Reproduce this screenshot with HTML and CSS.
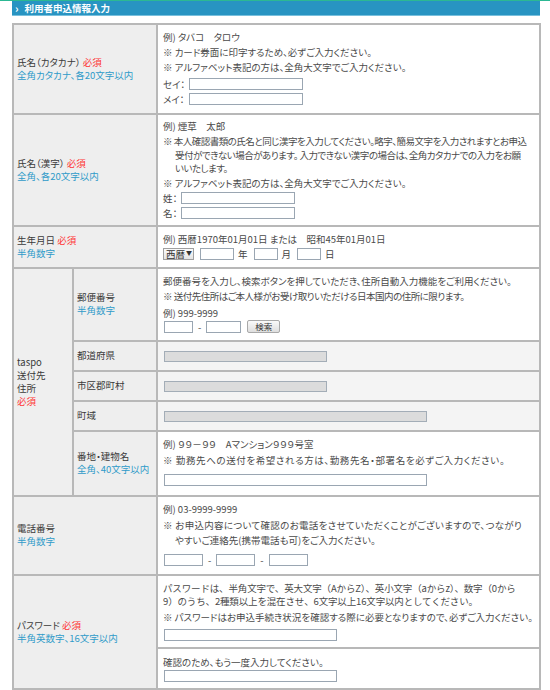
FILE: index.html
```html
<!DOCTYPE html>
<html lang="ja">
<head>
<meta charset="utf-8">
<title>利用者申込情報入力</title>
<link rel="stylesheet" href="styles.css">
</head>
<body>
<div class="topline"></div>
<div class="page">
  <h2 class="bar"><span class="chev">›</span>利用者申込情報入力</h2>
  <table class="form">
    <colgroup><col class="c1"><col class="c2"><col class="c3"></colgroup>
    <tr>
      <th colspan="2" class="lab"><span class="t">氏名（カタカナ）</span> <span class="req">必須</span><br><span class="hint">全角カタカナ、各20文字以内</span></th>
      <td class="f r1">
        <p>例) タバコ　タロウ</p>
        <p class="note">※ カード券面に印字するため、必ずご入力ください。</p>
        <p class="note">※ アルファベット表記の方は、全角大文字でご入力ください。</p>
        <div class="pairs">
          <label class="line"><span class="k kana">セイ：</span><input type="text" class="in w114"></label>
          <label class="line"><span class="k kana">メイ：</span><input type="text" class="in w114"></label>
        </div>
      </td>
    </tr>
    <tr>
      <th colspan="2" class="lab"><span class="t">氏名（漢字）</span> <span class="req">必須</span><br><span class="hint">全角、各20文字以内</span></th>
      <td class="f r2">
        <p>例) 煙草　太郎</p>
        <p class="note tight">※ 本人確認書類の氏名と同じ漢字を入力してください。略字、簡易文字を入力されますとお申込<br>受付ができない場合があります。 入力できない漢字の場合は、全角カタカナでの入力をお願<br>いいたします。</p>
        <p class="note after">※ アルファベット表記の方は、全角大文字でご入力ください。</p>
        <div class="pairs">
          <label class="line"><span class="k kanji">姓：</span><input type="text" class="in w114"></label>
          <label class="line"><span class="k kanji">名：</span><input type="text" class="in w114"></label>
        </div>
      </td>
    </tr>
    <tr>
      <th colspan="2" class="lab"><span class="t">生年月日</span> <span class="req">必須</span><br><span class="hint">半角数字</span></th>
      <td class="f r3">
        <p>例) 西暦1970年01月01日 または　昭和45年01月01日</p>
        <div class="line date">
          <span class="select">西暦<span class="arr">▼</span></span>
          <input type="text" class="in w34"><span class="u">年</span>
          <input type="text" class="in w24"><span class="u">月</span>
          <input type="text" class="in w24"><span class="u">日</span>
        </div>
      </td>
    </tr>
    <tr>
      <th rowspan="5" class="lab taspo"><span class="t">taspo<br>送付先<br>住所</span><br><span class="req">必須</span></th>
      <th class="lab sublab"><span class="t">郵便番号</span><br><span class="hint">半角数字</span></th>
      <td class="f r4">
        <p>郵便番号を入力し、検索ボタンを押していただき、住所自動入力機能をご利用ください。</p>
        <p class="note zipnote">※ 送付先住所はご本人様がお受け取りいただける日本国内の住所に限ります。</p>
        <p class="ex2">例) 999-9999</p>
        <div class="line zip">
          <input type="text" class="in w29"><span class="dash">-</span><input type="text" class="in w35">
          <button type="button" class="btn">検索</button>
        </div>
      </td>
    </tr>
    <tr>
      <th class="lab sublab"><span class="t">都道府県</span></th>
      <td class="f dis"><input type="text" class="in off w163" disabled></td>
    </tr>
    <tr>
      <th class="lab sublab"><span class="t">市区郡町村</span></th>
      <td class="f dis"><input type="text" class="in off w163" disabled></td>
    </tr>
    <tr>
      <th class="lab sublab"><span class="t">町域</span></th>
      <td class="f dis"><input type="text" class="in off w263" disabled></td>
    </tr>
    <tr>
      <th class="lab sublab"><span class="t">番地・建物名</span><br><span class="hint">全角、40文字以内</span></th>
      <td class="f r8">
        <p>例) ９９－９９　Aマンション９９９号室</p>
        <p class="note wide">※ 勤務先への送付を希望される方は、勤務先名・部署名を必ずご入力ください。</p>
        <div class="line addr"><input type="text" class="in w263"></div>
      </td>
    </tr>
    <tr>
      <th colspan="2" class="lab"><span class="t">電話番号</span><br><span class="hint">半角数字</span></th>
      <td class="f r9">
        <p>例) 03-9999-9999</p>
        <p class="note tall"><span class="telwide">※ お申込内容について確認のお電話をさせていただくことがございますので、つながり</span><br>やすいご連絡先(携帯電話も可)をご入力ください。</p>
        <div class="line tel">
          <input type="text" class="in w39"><span class="dash">-</span><input type="text" class="in w39"><span class="dash">-</span><input type="text" class="in w39">
        </div>
      </td>
    </tr>
    <tr>
      <th rowspan="2" colspan="2" class="lab"><span class="t">パスワード</span> <span class="req">必須</span><br><span class="hint">半角英数字、16文字以内</span></th>
      <td class="f r10">
        <p class="pw">パスワードは、半角文字で、英大文字（AからZ）、英小文字（aからz）、数字（0から<br>9）のうち、2種類以上を混在させ、6文字以上16文字以内としてください。</p>
        <p class="note pwn">※ パスワードはお申込手続き状況を確認する際に必要となりますので、必ずご入力ください。</p>
        <div class="line pwi"><input type="password" class="in w173"></div>
      </td>
    </tr>
    <tr>
      <td class="f r11">
        <p class="pwc-t">確認のため、もう一度入力してください。</p>
        <div class="line pwc"><input type="password" class="in w173"></div>
      </td>
    </tr>
  </table>
</div>
</body>
</html>
```

FILE: styles.css
```css
* { box-sizing: border-box; }

body {
  margin: 0;
  background: #ffffff;
  color: #4a4a4a;
  font-family: "Noto Sans CJK JP", "Noto Sans", sans-serif;
  font-size: 9.5px;
  font-feature-settings: "palt";
}

.topline {
  height: 1px;
  background: #2cb893;
}

.page {
  padding: 0 9px 0 12px;
}

.bar {
  margin: 0 1px 0 0;
  height: 15px;
  background: #2894c2;
  border-bottom: 1px solid #79c0dd;
  color: #ffffff;
  font-size: 9.5px;
  font-weight: bold;
  line-height: 14px;
  display: flex;
  align-items: center;
  padding-left: 3px;
}

.chev {
  font-size: 11px;
  margin-right: 6px;
  line-height: 14px;
}

.form {
  margin-top: 7px;
  width: 529px;
  table-layout: fixed;
  border-collapse: collapse;
  border: 2px solid #a9a9a9;
}

.c1 { width: 60px; }
.c2 { width: 84px; }

.form th,
.form td {
  border: 2px solid #b8b8b8;
  vertical-align: middle;
}

.lab {
  background: #eeeeee;
  text-align: left;
  font-weight: normal;
  padding: 0 3px;
  line-height: 13px;
  color: #3a3a3a;
}

.taspo { background: #efefef; }

.req { color: #ff3333; }
.hint { color: #2f9bc9; }

.f {
  background: #ffffff;
  padding: 6px 5px 8px 5px;
}

.f p {
  margin: 3px 0 0;
  line-height: 12px;
  white-space: nowrap;
}
.f p:first-child { margin-top: 0; }

.note {
  padding-left: 12px;
  text-indent: -12px;
}

.tight {
  letter-spacing: -0.5px;
  line-height: 13.5px !important;
}
.after { margin-top: 1px !important; }
.zipnote { letter-spacing: -0.5px; }
.wide { letter-spacing: 0.6px; }
.telwide { letter-spacing: 0.3px; }

.line {
  display: flex;
  align-items: center;
  height: 12px;
}

.pairs {
  margin-top: 5px;
  display: flex;
  flex-direction: column;
  gap: 3px;
}

.k { display: inline-block; }
.kana { width: 26px; }
.kanji { width: 18px; }

.in {
  height: 12px;
  padding: 0;
  margin: 0;
  border: 1px solid #9aa6b2;
  background: #ffffff;
  font: inherit;
}

.off {
  height: 11px;
  background: #dcdcdc;
  border-color: #a3adb7;
}

.w24 { width: 24px; }
.w29 { width: 29px; }
.w34 { width: 34px; }
.w35 { width: 35px; }
.w39 { width: 39px; }
.w114 { width: 114px; }
.w163 { width: 163px; }
.w173 { width: 173px; }
.w263 { width: 263px; }

.r1 { padding-top: 6px; padding-bottom: 8px; }
.r2 { padding-top: 5px; padding-bottom: 6px; }
.r2 .pairs { margin-top: 3px; }
.r3 { padding-top: 6px; padding-bottom: 7px; }
.r4 { padding-top: 6px; padding-bottom: 7px; }
.dis { background: #f4f4f4; padding: 9px 5px 8px 6px; line-height: 0; }
.r8 { padding-top: 6px; padding-bottom: 9px; }
.r8 .note { margin-top: 4px; }
.r9 { padding-top: 6px; padding-bottom: 8px; }
.r10 { padding-top: 6px; padding-bottom: 6px; }
.r11 { padding-top: 7px; padding-bottom: 6px; }

.date { margin-top: 3px; }
.select {
  display: inline-flex;
  align-items: center;
  width: 31px;
  height: 12px;
  padding-left: 2px;
  border: 1px solid #a0a0a0;
  background: linear-gradient(#fbfbfb, #e4e4e4);
  color: #333;
  line-height: 10px;
  margin-right: 6px;
}
.arr {
  font-size: 6px;
  margin-left: 1px;
  line-height: 8px;
  align-self: flex-start;
}
.u { margin: 0 6px 0 4px; color: #444; }

.ex2 { margin-top: 5px !important; }
.zip { margin-top: 2px; }
.zip .w29 { margin-left: 1px; }
.dash { margin: 0 5px; }
.btn {
  margin-left: 6px;
  width: 33px;
  height: 13px;
  padding: 0;
  border: 1px solid #a9a9a9;
  border-radius: 2px;
  background: linear-gradient(#fafafa, #dedede);
  font: inherit;
  font-size: 8.5px;
  line-height: 11px;
  color: #333;
}

.addr { margin-top: 8px; }
.addr .in, .tel .in:first-child, .pwi .in, .pwc .in { margin-left: 1px; }

.tall { line-height: 15px !important; }
.tel { margin-top: 6px; }

.pw {
  line-height: 13px !important;
  font-feature-settings: normal;
  letter-spacing: -0.15px;
}
.pwn, .pwc-t { line-height: 13px !important; }
.pwi { margin-top: 5px; }
.pwc { margin-top: 1px; }
```
